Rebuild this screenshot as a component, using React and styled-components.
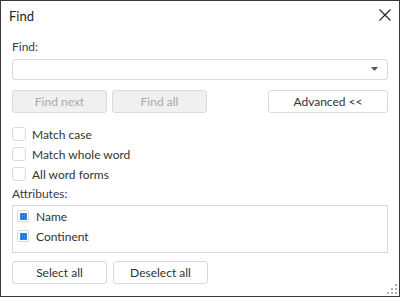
import styled, { createGlobalStyle } from 'styled-components';

const GlobalStyle = createGlobalStyle`
  html, body {
    margin: 0;
    padding: 0;
    background: #ffffff;
  }
  * {
    box-sizing: border-box;
  }
`;

const FONT = `Lato, 'Noto Sans', sans-serif`;
const TEXT = '#333333';
const BORDER = '#d9d9d9';

export default function App() {
  return (
    <>
      <GlobalStyle />
      <Window>
        <Header>
          <Title>Find</Title>
          <CloseButton aria-label="Close">
            <svg width="12" height="12" viewBox="0 0 12 12">
              <path d="M0.5 0.5 L11.5 11.5 M11.5 0.5 L0.5 11.5" stroke="#222" strokeWidth="1.1" />
            </svg>
          </CloseButton>
        </Header>

        <Body>
          <Label>Find:</Label>
          <Combo>
            <ComboInput />
            <svg width="8" height="5" viewBox="0 0 8 5">
              <path d="M0 0 H7 L3.5 4 Z" fill="#555" />
            </svg>
          </Combo>

          <ButtonRow>
            <Button disabled>Find next</Button>
            <Button disabled>Find all</Button>
            <Spacer />
            <Button wide>Advanced &lt;&lt;</Button>
          </ButtonRow>

          <Options>
            {['Match case', 'Match whole word', 'All word forms'].map((t) => (
              <OptionRow key={t}>
                <Box />
                <span>{t}</span>
              </OptionRow>
            ))}
          </Options>

          <Label top>Attributes:</Label>
          <ListBox>
            {['Name', 'Continent'].map((t) => (
              <ListItem key={t}>
                <SmallBox>
                  <svg width="7" height="7" viewBox="0 0 7 7">
                    <rect width="7" height="7" fill="#3388e0" />
                    {[1, 3, 5].map((y) =>
                      [1, 3, 5].map((x) => (
                        <rect key={`${x}-${y}`} x={x} y={y} width="1" height="1" fill="#1d62b5" />
                      ))
                    )}
                  </svg>
                </SmallBox>
                <span>{t}</span>
              </ListItem>
            ))}
          </ListBox>

          <ButtonRow bottom>
            <Button>Select all</Button>
            <Button>Deselect all</Button>
          </ButtonRow>
        </Body>

        <Grip>
          <svg width="10" height="10" viewBox="0 0 10 10">
            {[
              [8, 0], [8, 4], [4, 4], [8, 8], [4, 8], [0, 8],
            ].map(([x, y]) => (
              <rect key={`${x}${y}`} x={x} y={y} width="2" height="2" fill="#b0b0b0" />
            ))}
          </svg>
        </Grip>
      </Window>
    </>
  );
}

const Window = styled.div`
  width: 400px;
  height: 297px;
  border: 1px solid #3a3a3a;
  background: #ffffff;
  position: relative;
  font-family: ${FONT};
  font-size: 12px;
  color: ${TEXT};
  display: flex;
  flex-direction: column;
`;

const Header = styled.div`
  height: 30px;
  padding: 0 8px 0 8px;
  display: flex;
  align-items: center;
  justify-content: space-between;
`;

const Title = styled.div`
  font-size: 13px;
  color: #222;
  line-height: 16px;
`;

const CloseButton = styled.div`
  width: 12px;
  height: 12px;
  margin-top: -2px;
  display: flex;
`;

const Body = styled.div`
  padding: 0 11px;
  display: flex;
  flex-direction: column;
`;

const Label = styled.div`
  line-height: 16px;
  margin-top: ${(p) => (p.top ? '2px' : '8px')};
  margin-bottom: ${(p) => (p.top ? '3px' : '4px')};
  color: #3a3a4a;
`;

const Combo = styled.div`
  height: 21px;
  border: 1px solid ${BORDER};
  border-radius: 3px;
  display: flex;
  align-items: center;
  padding: 0 8px 0 4px;
`;

const ComboInput = styled.div`
  flex: 1;
`;

const ButtonRow = styled.div`
  display: flex;
  gap: ${(p) => (p.bottom ? '6px' : '5px')};
  margin-top: ${(p) => (p.bottom ? '8px' : '10px')};
`;

const Spacer = styled.div`
  flex: 1;
`;

const Button = styled.div`
  width: ${(p) => (p.wide ? '120px' : '95px')};
  height: 23px;
  border: 1px solid ${BORDER};
  border-radius: 3px;
  background: ${(p) => (p.disabled ? '#f0f0f0' : '#ffffff')};
  color: ${(p) => (p.disabled ? '#a9a9a9' : TEXT)};
  display: flex;
  align-items: center;
  justify-content: center;
  line-height: 16px;
`;

const Options = styled.div`
  margin-top: 11px;
  display: flex;
  flex-direction: column;
`;

const OptionRow = styled.div`
  height: 20px;
  display: flex;
  align-items: center;
  gap: 6px;
`;

const Box = styled.div`
  width: 14px;
  height: 14px;
  border: 1px solid ${BORDER};
  border-radius: 3px;
  background: #ffffff;
`;

const ListBox = styled.div`
  height: 48px;
  border: 1px solid ${BORDER};
  padding: 0 4px;
  display: flex;
  flex-direction: column;
`;

const ListItem = styled.div`
  height: 20px;
  display: flex;
  align-items: center;
  gap: 7px;
`;

const SmallBox = styled.div`
  width: 12px;
  height: 12px;
  border: 1px solid ${BORDER};
  border-radius: 2px;
  display: flex;
  align-items: center;
  justify-content: center;
`;

const Grip = styled.div`
  position: absolute;
  right: 2px;
  bottom: 2px;
  width: 10px;
  height: 10px;
  display: flex;
`;
